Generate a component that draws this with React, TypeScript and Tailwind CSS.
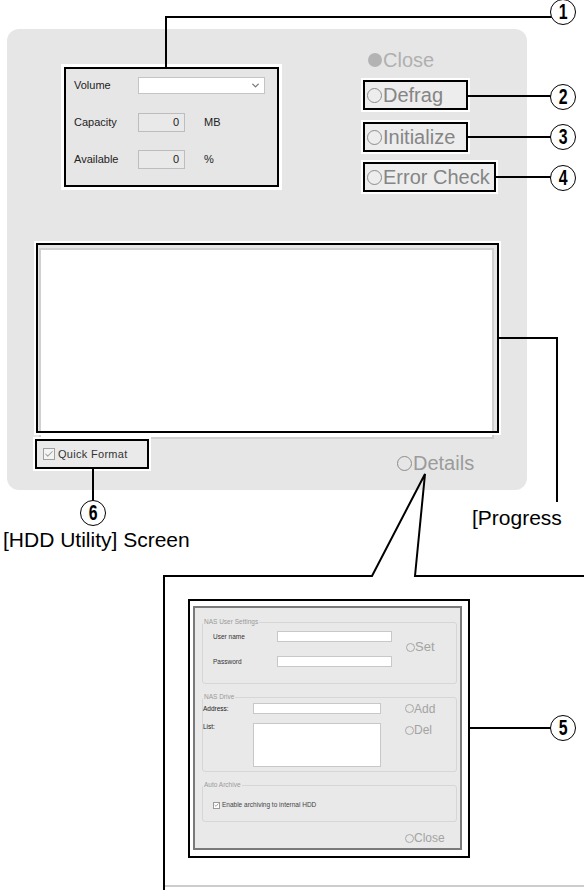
import * as React from "react";
import { ChevronDown, Check } from "lucide-react";

function Circled({ n, className }: { n: number; className: string }) {
  return (
    <div
      className={`absolute flex h-[26px] w-[26px] items-center justify-center rounded-full border-[1.5px] border-black bg-white ${className}`}
    >
      <span className="inline-block scale-x-[0.72] text-[22px] font-bold leading-none text-black">{n}</span>
    </div>
  );
}

function Ring({ className = "h-[15px] w-[15px]" }: { className?: string }) {
  return <span className={`inline-block shrink-0 rounded-full border border-[#8c8c8c] ${className}`} />;
}

function UtilButton({ label, className }: { label: string; className: string }) {
  return (
    <div
      className={`flex h-[30px] items-center border-2 border-black bg-[#ededed] pl-[2px] shadow-[0_0_0_2px_#fff] ${className}`}
    >
      <Ring />
      <span className="ml-[1px] text-[20px] leading-[26px] text-[#858585]">{label}</span>
    </div>
  );
}

function ValueRow({ label, unit }: { label: string; unit: string }) {
  return (
    <div className="flex h-[19px] items-center">
      <span className="w-[64px]">{label}</span>
      <div className="flex h-[19px] w-[47px] items-center justify-end border border-[#bdbdbd] bg-[#e9e9e9] pr-[5px]">0</div>
      <span className="ml-[19px]">{unit}</span>
    </div>
  );
}

function SmallBtn({ label, className = "text-[12px]" }: { label: string; className?: string }) {
  return (
    <div className={`flex items-center leading-[16px] text-[#a3a3a3] ${className}`}>
      <Ring className="h-[9px] w-[9px] border-[#a8a8a8]" />
      <span>{label}</span>
    </div>
  );
}

// tiny tick for the dialog checkbox
function Tick() {
  return (
    <svg width="6" height="6" viewBox="0 0 6 6" fill="none">
      <polyline points="0.8,3 2.4,4.6 5.2,1.2" stroke="#8f8f8f" strokeWidth="1" />
    </svg>
  );
}

function DetailsDialog() {
  return (
    <div className="ml-[188px] mt-[49px] h-[259px] w-[282px] border-2 border-black bg-white pl-[3px] pt-[5px]">
      <div className="h-[244px] w-[269px] border-2 border-[#7a7a7a] bg-[#e9e9e9] pl-[7px] pt-[10px] text-[6.5px] text-[#333]">
        <fieldset className="h-[66px] w-[255px] rounded-[3px] border border-[#d6d6d6]">
          <legend className="px-[1px] leading-[8px] text-[#999]">NAS User Settings</legend>
          <div className="flex items-center pt-[5px]">
            <div className="flex flex-col gap-[14px]">
              <div className="flex h-[11px] items-center">
                <span className="w-[74px] pl-[10px]">User name</span>
                <div className="h-[11px] w-[115px] border border-[#c8c8c8] bg-white" />
              </div>
              <div className="flex h-[11px] items-center">
                <span className="w-[74px] pl-[10px]">Password</span>
                <div className="h-[11px] w-[115px] border border-[#c8c8c8] bg-white" />
              </div>
            </div>
            <div className="mb-[4px] ml-[14px]">
              <SmallBtn label="Set" className="text-[13px]" />
            </div>
          </div>
        </fieldset>

        <fieldset className="mt-[9px] h-[79px] w-[255px] rounded-[3px] border border-[#d6d6d6]">
          <legend className="px-[1px] leading-[8px] text-[#999]">NAS Drive</legend>
          <div className="mt-[2px] flex h-[11px] items-center">
            <span className="w-[50px] text-[#222]">Address:</span>
            <div className="h-[11px] w-[128px] border border-[#c8c8c8] bg-white" />
            <div className="ml-[24px]">
              <SmallBtn label="Add" />
            </div>
          </div>
          <div className="mt-[9px] flex items-start">
            <span className="w-[50px] leading-[8px] text-[#222]">List:</span>
            <div className="h-[44px] w-[128px] border border-[#c8c8c8] bg-white" />
            <div className="ml-[24px] mt-[-1px]">
              <SmallBtn label="Del" />
            </div>
          </div>
        </fieldset>

        <fieldset className="mt-[9px] h-[41px] w-[255px] rounded-[3px] border border-[#d6d6d6]">
          <legend className="px-[1px] leading-[8px] text-[#999]">Auto Archive</legend>
          <div className="mt-[12px] flex h-[8px] items-center pl-[10px]">
            <span className="flex h-[7px] w-[7px] items-center justify-center border border-[#9a9a9a] bg-white">
              <Tick />
            </span>
            <span className="ml-[2px] text-[#444]">Enable archiving to internal HDD</span>
          </div>
        </fieldset>

        <div className="ml-[203px] mt-[8px]">
          <SmallBtn label="Close" />
        </div>
      </div>
    </div>
  );
}

export default function App() {
  return (
    <div className="relative h-[890px] w-[584px] overflow-hidden bg-white font-['Liberation_Sans',Arial,sans-serif]">
      <div className="relative ml-[7px] mt-[29px] h-[461px] w-[520px] rounded-[12px] bg-[#e6e6e6]">
        <div className="flex h-[163px] items-start pt-[20px]">
          <div className="ml-[57px] mt-[18px] h-[120px] w-[215px] border-2 border-black pl-[8px] pt-[7px] text-[11px] text-[#222] shadow-[0_0_0_3px_#fff]">
            <div className="flex flex-col gap-[18px]">
              <div className="flex h-[19px] items-center">
                <span className="w-[64px]">Volume</span>
                <div className="flex h-[17px] w-[127px] items-center justify-end border border-[#c4c4c4] bg-white pr-[3px]">
                  <ChevronDown size={11} strokeWidth={3} color="#7a7a7a" />
                </div>
              </div>
              <ValueRow label="Capacity" unit="MB" />
              <ValueRow label="Available" unit="%" />
            </div>
          </div>

          <div className="ml-[84px] flex flex-col items-start">
            <div className="flex h-[22px] items-center pl-[5px] text-[20px] text-[#b0b0b0]">
              <span className="inline-block h-[14px] w-[14px] rounded-full bg-[#b3b3b3]" />
              <span className="ml-[1px]">Close</span>
            </div>
            <UtilButton label="Defrag" className="mt-[9px] w-[105px]" />
            <UtilButton label="Initialize" className="mt-[12px] w-[105px]" />
            <UtilButton label="Error Check" className="mt-[10px] w-[133px]" />
          </div>
        </div>

        <div className="ml-[32px] mt-[56px] h-[191px] w-[455px] border-2 border-[#d0d0d0] bg-white" />
        <div className="absolute left-[29px] top-[214px] h-[190px] w-[463px] border-2 border-black shadow-[0_0_0_2px_#fff]" />

        <div className="flex items-start">
          <div className="ml-[28px] flex h-[30px] w-[114px] items-center border-2 border-black bg-[#eaeaea] pl-[6px] shadow-[0_0_0_2px_#fff]">
            <span className="flex h-[12px] w-[12px] items-center justify-center border border-[#a0a0a0] bg-[#f4f4f4]">
              <Check size={10} strokeWidth={2.5} color="#a0a0a0" />
            </span>
            <span className="ml-[3px] text-[11px] tracking-[0.3px] text-[#333]">Quick Format</span>
          </div>
          <div className="ml-[248px] mt-[12px] flex items-center text-[20px] leading-[24px] text-[#9b9b9b]">
            <Ring />
            <span className="ml-[1px]">Details</span>
          </div>
        </div>
      </div>

      <div className="flex h-[60px] items-start text-[21px] leading-[24px] text-black">
        <span className="mt-[38px] w-[472px] pl-[3px]">[HDD Utility] Screen</span>
        <span className="mt-[16px]">[Progress</span>
      </div>

      <DetailsDialog />

      <svg className="pointer-events-none absolute left-0 top-0" width="584" height="890" fill="none">
        <g stroke="#000" strokeWidth="2">
          <polyline points="166,67 166,17 552,17" />
          <line x1="468" y1="96" x2="552" y2="96" />
          <line x1="468" y1="137" x2="552" y2="137" />
          <line x1="496" y1="177" x2="552" y2="177" />
          <polyline points="499,338 557,338 557,502" />
          <line x1="93" y1="469" x2="93" y2="502" />
          <polyline points="164,890 164,576 372,576 425,474 415,576 584,576" />
          <line x1="470" y1="728" x2="552" y2="728" />
        </g>
        <line x1="165" y1="886" x2="584" y2="886" stroke="#bdbdbd" strokeWidth="1.5" />
      </svg>

      <Circled n={1} className="left-[550px] top-[-1px]" />
      <Circled n={2} className="left-[550px] top-[84px]" />
      <Circled n={3} className="left-[550px] top-[124px]" />
      <Circled n={4} className="left-[550px] top-[165px]" />
      <Circled n={5} className="left-[550px] top-[715px]" />
      <Circled n={6} className="left-[80px] top-[500px]" />
    </div>
  );
}
